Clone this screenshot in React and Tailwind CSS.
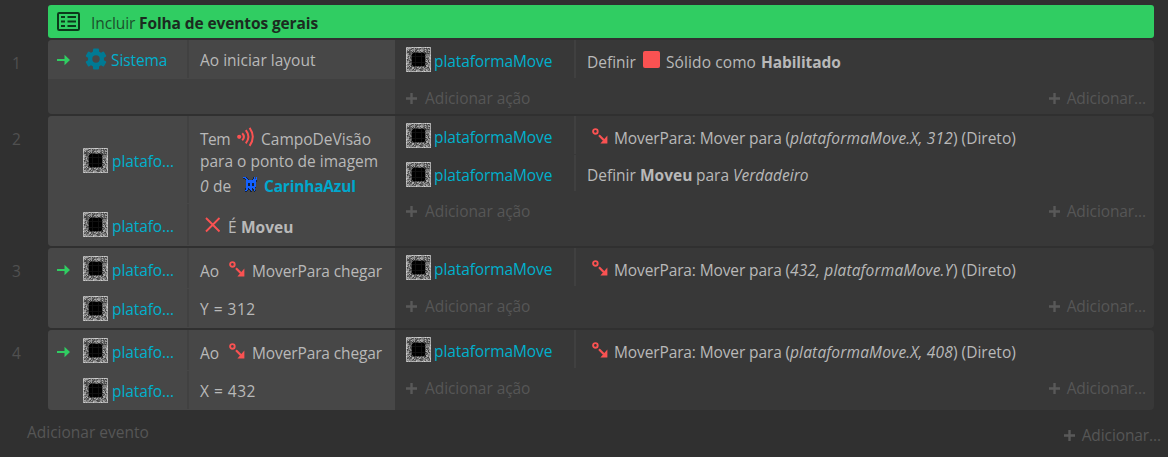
const CHIP_SIZE = 25;

function chipShade(x, y) {
  const ring = Math.max(Math.abs(x - 12), Math.abs(y - 12));
  const dist = Math.hypot(x - 12, y - 12);
  let h = (x * 374761393 + y * 668265263) | 0;
  h = Math.imul(h ^ (h >>> 13), 1274126177);
  const noise = ((h ^ (h >>> 16)) >>> 0) / 4294967296;
  if (ring <= 6 && dist < 8) {
    return x === 9 || x === 15 || y === 9 || y === 15 ? 16 : 0;
  }
  if (ring === 12) return Math.round(160 + noise * 50);
  if (ring <= 7) return Math.round(35 + noise * 75);
  return Math.round(60 + noise * 120);
}

const CHIP_PIXELS = Array.from({ length: CHIP_SIZE * CHIP_SIZE }, (_, i) => {
  const x = i % CHIP_SIZE;
  const y = Math.floor(i / CHIP_SIZE);
  const v = chipShade(x, y);
  return { x, y, fill: `rgb(${v},${v},${v})` };
});

function Chip() {
  return (
    <svg width="25" height="25" viewBox="0 0 25 25" shapeRendering="crispEdges" className="shrink-0">
      {CHIP_PIXELS.map((p) => (
        <rect key={`${p.x}-${p.y}`} x={p.x} y={p.y} width="1" height="1" fill={p.fill} />
      ))}
    </svg>
  );
}

function Gear() {
  return (
    <svg width="22" height="22" viewBox="0 0 22 22" className="shrink-0">
      <g fill="#007a94">
        {[0, 60, 120].map((a) => (
          <rect key={a} x="8" y="0.5" width="6" height="21" rx="1" transform={`rotate(${a} 11 11)`} />
        ))}
        <circle cx="11" cy="11" r="8" />
      </g>
      <circle cx="11" cy="11" r="3.7" fill="#474747" />
    </svg>
  );
}

function Arrow() {
  return (
    <svg width="14" height="12" viewBox="0 0 14 12" className="shrink-0">
      <path d="M0 5h7.5V0.8L13 6L7.5 11.2V7H0z" fill="#30cd62" />
    </svg>
  );
}

function MoveIcon() {
  return (
    <svg width="17" height="17" viewBox="0 0 17 17" className="shrink-0">
      <circle cx="3.4" cy="3.4" r="2.3" fill="none" stroke="#fa5252" strokeWidth="1.9" />
      <path d="M7 7.3L12 12.3" stroke="#fa5252" strokeWidth="2.2" />
      <path d="M15.4 7.6V15.4H8.4z" fill="#fa5252" />
    </svg>
  );
}

function SightIcon() {
  return (
    <svg width="19" height="20" viewBox="0 0 19 20" className="shrink-0" fill="none" stroke="#fa5252" strokeWidth="2">
      <circle cx="2.2" cy="9.8" r="2.1" fill="#fa5252" stroke="none" />
      <path d="M5.2 6.2Q8.6 9.8 5.2 13.4" />
      <path d="M8.8 3.2Q14 9.8 8.8 16.4" />
      <path d="M12.6 0.8Q19 9.8 12.6 18.8" />
    </svg>
  );
}

function CrossIcon() {
  return (
    <svg width="16" height="16" viewBox="0 0 16 16" className="shrink-0">
      <path d="M1 1L14.5 14.5M14.5 1L1 14.5" stroke="#fa5252" strokeWidth="1.9" />
    </svg>
  );
}

const SPRITE = [
  "bbbk......kb.b",
  "kkbbk.....kb.b",
  "..kbbk...kbbbb",
  "...bbbbbbbbbbk",
  "...bbbbbbbbbbk",
  "...bbbbbbbbbb.",
  "...bbkkbbkkbb.",
  "...bbkkbbkkbb.",
  "...bbkkbbkkbb.",
  "...bbbbbbbbbb.",
  "...bbbbbbbbbk.",
  "..kbbkbbbkbb..",
  "..kbbkkbbkkb..",
  "..bbk..kb.kbk.",
  "..kk...kk..k..",
];

function Sprite() {
  return (
    <svg width="14" height="15" viewBox="0 0 14 15" shapeRendering="crispEdges" className="shrink-0">
      {SPRITE.flatMap((row, y) =>
        [...row].map((c, x) =>
          c === "." ? null : (
            <rect key={`${x}-${y}`} x={x} y={y} width="1" height="1" fill={c === "b" ? "#1461ff" : "#15223a"} />
          )
        )
      )}
    </svg>
  );
}

function SheetIcon() {
  return (
    <svg width="23" height="20" viewBox="0 0 23 20" className="shrink-0" stroke="#0c381b" strokeWidth="2" fill="none">
      <rect x="1" y="1" width="21" height="17" rx="1.2" />
      <path d="M4 5h4M10.5 5h8.5M4 9.5h4M10.5 9.5h8.5M4 14h4M10.5 14h8.5" />
    </svg>
  );
}

function Plus() {
  return (
    <svg width="11" height="11" viewBox="0 0 11 11" className="shrink-0">
      <path d="M5.5 0v11M0 5.5h11" stroke="#595959" strokeWidth="2.4" />
    </svg>
  );
}

function Name({ children, className }) {
  return <span className={`text-[#00b0cd] ${className}`}>{children}</span>;
}

function Condition({ height, trigger, triggerClass, icon, iconClass, name, nameClass, children }) {
  return (
    <div className={`flex bg-[#474747] ${height}`}>
      <div className="flex w-[139px] shrink-0 items-start">
        <div className={`w-[35px] shrink-0 pl-[9px] ${triggerClass || ""}`}>{trigger ? <Arrow /> : null}</div>
        <div className={`w-[28px] shrink-0 ${iconClass}`}>{icon}</div>
        <Name className={nameClass}>{name}</Name>
      </div>
      <div className="mb-px w-[2px] shrink-0 bg-[#414141]" />
      <div className="flex items-start pl-[11px]">{children}</div>
    </div>
  );
}

function Action({ height, nameClass, children }) {
  return (
    <div className={`flex ${height}`}>
      <div className="flex w-[179px] shrink-0 items-start pl-[11px]">
        <div className="mt-[7px] w-[28px] shrink-0">
          <Chip />
        </div>
        <Name className={`tracking-[-0.1px] ${nameClass}`}>plataformaMove</Name>
      </div>
      <div className="mb-px w-[2px] shrink-0 bg-[#404040]" />
      <div className="flex items-start pl-[11px]">{children}</div>
    </div>
  );
}

function AddRow() {
  return (
    <div className="flex items-start justify-between pr-[8px] pl-[11px] text-[#565656]">
      <div className="flex items-start gap-[8px]">
        <div className="mt-[14px]">
          <Plus />
        </div>
        <span className="mt-[9px] tracking-[-0.07px]">Adicionar ação</span>
      </div>
      <div className="flex items-start gap-[7px]">
        <div className="mt-[14px]">
          <Plus />
        </div>
        <span className="mt-[9px] tracking-[-0.1px]">Adicionar...</span>
      </div>
    </div>
  );
}

function EventBlock({ number, height, conditions, actions }) {
  return (
    <div className={`flex ${height}`}>
      <div className="w-[48px] shrink-0 pt-[13px] pl-[12px] text-[#505050]">{number}</div>
      <div className="flex w-[1106px] overflow-hidden rounded-[4px] bg-[#383838]">
        <div className="w-[347px] shrink-0 bg-[#404040]">{conditions}</div>
        <div className="grow">
          {actions}
          <AddRow />
        </div>
      </div>
    </div>
  );
}

function MoveTo({ args }) {
  return (
    <>
      <div className="mt-[12px] ml-[5px] w-[22px] shrink-0">
        <MoveIcon />
      </div>
      <span className="mt-[12px] w-[176px] tracking-[-0.12px]">MoverPara: Mover para (</span>
      <span className="mt-[12px] w-[163px] tracking-[0.16px] italic">{args}</span>
      <span className="mt-[12px]">) (Direto)</span>
    </>
  );
}

function ArrivedEvent({ number, test, args }) {
  return (
    <EventBlock
      number={number}
      height="h-[80px]"
      conditions={
        <>
          <Condition
            height="h-[41px]"
            trigger
            triggerClass="pt-[16px]"
            icon={<Chip />}
            iconClass="pt-[8px]"
            name="platafo..."
            nameClass="mt-[12px] ml-[1px] tracking-[-0.1px]"
          >
            <span className="mt-[13px] w-[29px]">Ao</span>
            <div className="mt-[13px] w-[23px]">
              <MoveIcon />
            </div>
            <span className="mt-[13px] tracking-[-0.12px]">MoverPara chegar</span>
          </Condition>
          <Condition
            height="h-[39px]"
            icon={<Chip />}
            iconClass="pt-[7px]"
            name="platafo..."
            nameClass="mt-[10px] ml-[1px] tracking-[-0.1px]"
          >
            <span className="mt-[10px] tracking-[0.5px]">{test}</span>
          </Condition>
        </>
      }
      actions={
        <Action height="h-[39px]" nameClass="mt-[11px]">
          <MoveTo args={args} />
        </Action>
      }
    />
  );
}

export default function App() {
  return (
    <div className="flex h-[457px] w-[1168px] flex-col overflow-hidden bg-[#303030] pt-[5px] font-['Open_Sans','Noto_Sans',sans-serif] text-[15.5px] leading-[20px] whitespace-nowrap text-[#b9b9b9]">
      <div className="ml-[48px] flex h-[33px] w-[1106px] shrink-0 items-start rounded-[3px] bg-[#30cd62] pl-[9px]">
        <div className="mt-[7px] w-[34px]">
          <SheetIcon />
        </div>
        <span className="mt-[8px] w-[48px] tracking-[-0.1px] text-[#1c4f2c]">Incluir</span>
        <span className="mt-[8px] font-bold tracking-[-0.11px] text-[#1b2b20]">Folha de eventos gerais</span>
      </div>

      <div className="mt-[2px] flex flex-col gap-[2px]">
        <EventBlock
          number="1"
          height="h-[74px]"
          conditions={
            <Condition
              height="h-[39px]"
              trigger
              triggerClass="pt-[14px]"
              icon={<Gear />}
              iconClass="pt-[8px] pl-[2px]"
              name="Sistema"
              nameClass="mt-[10px] tracking-[-0.1px]"
            >
              <span className="mt-[10px]">Ao iniciar layout</span>
            </Condition>
          }
          actions={
            <Action height="h-[39px]" nameClass="mt-[11px]">
              <span className="mt-[12px] w-[56px]">Definir</span>
              <div className="mt-[11px] mr-[6px] size-[17px] rounded-[2px] bg-[#fa5252]" />
              <span className="mt-[12px] w-[95px] tracking-[0.1px]">Sólido como</span>
              <span className="mt-[12px] font-bold tracking-[-0.1px]">Habilitado</span>
            </Action>
          }
        />

        <EventBlock
          number="2"
          height="h-[130px]"
          conditions={
            <>
              <Condition
                height="h-[88px]"
                icon={<Chip />}
                iconClass="pt-[32px]"
                name="platafo..."
                nameClass="mt-[35px] ml-[1px] tracking-[-0.1px]"
              >
                <div className="flex flex-col pt-[11px]">
                  <div className="flex h-[24px] items-start">
                    <span className="mt-[2px] w-[37px] tracking-[-0.5px]">Tem</span>
                    <div className="w-[24px]">
                      <SightIcon />
                    </div>
                    <span className="mt-[2px]">CampoDeVisão</span>
                  </div>
                  <div className="h-[25px]">para o ponto de imagem</div>
                  <div className="flex items-start">
                    <span className="w-[13px] italic">0</span>
                    <span className="w-[30px]">de</span>
                    <div className="mt-[1px] w-[21px]">
                      <Sprite />
                    </div>
                    <span className="font-bold tracking-[-0.2px] text-[#00a8cd]">CarinhaAzul</span>
                  </div>
                </div>
              </Condition>
              <Condition
                height="h-[42px]"
                icon={<Chip />}
                iconClass="pt-[8px]"
                name="platafo..."
                nameClass="mt-[12px] ml-[1px] tracking-[-0.1px]"
              >
                <div className="mt-[13px] ml-[5px] w-[23px]">
                  <CrossIcon />
                </div>
                <span className="mt-[13px] w-[13px]">É</span>
                <span className="mt-[13px] font-bold">Moveu</span>
              </Condition>
            </>
          }
          actions={
            <>
              <Action height="h-[39px]" nameClass="mt-[11px]">
                <MoveTo args="plataformaMove.X, 312" />
              </Action>
              <Action height="h-[37px]" nameClass="mt-[10px]">
                <span className="mt-[10px] w-[53px]">Definir</span>
                <span className="mt-[10px] w-[56px] font-bold">Moveu</span>
                <span className="mt-[10px] w-[37px]">para</span>
                <span className="mt-[10px] italic">Verdadeiro</span>
              </Action>
            </>
          }
        />

        <ArrivedEvent number="3" test="Y = 312" args="432, plataformaMove.Y" />
        <ArrivedEvent number="4" test="X = 432" args="plataformaMove.X, 408" />
      </div>

      <div className="flex items-start justify-between pr-[8px] pl-[27px] text-[#565656]">
        <span className="mt-[12px]">Adicionar evento</span>
        <div className="flex items-start gap-[7px]">
          <div className="mt-[20px]">
            <Plus />
          </div>
          <span className="mt-[15px] -mr-px tracking-[-0.1px]">Adicionar...</span>
        </div>
      </div>
    </div>
  );
}
